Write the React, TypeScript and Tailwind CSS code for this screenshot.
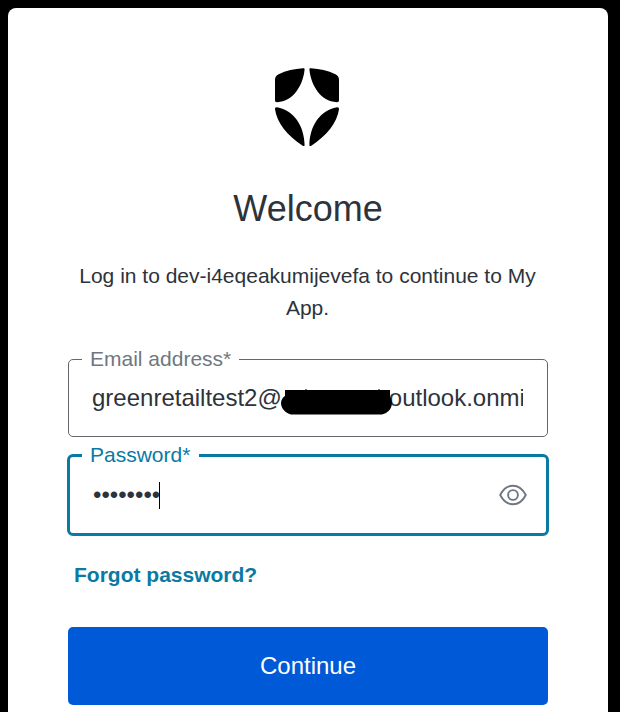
function Logo() {
  return (
    <svg className="ml-[206px] block h-[79px] w-[66px]" viewBox="0 0 66 79" fill="#000">
      <path d="M29 .2C30 .1 30.7.5 30.6 1.5 29 17.500 19.500 33.200 3.2 34.2 1.7 34.3 1 33.5 1 32.2V11.8C1 9.3 2.3 7.3 4.6 6.2 12 2.5 20.5.7 29 .2Z" />
      <path d="M37 .2C36 .1 35.3.5 35.4 1.5 37 17.500 46.500 33.200 62.8 34.2 64.3 34.3 65 33.5 65 32.2V11.8C65 9.3 63.7 7.3 61.4 6.2 54 2.5 45.5.7 37 .2Z" />
      <path d="M3 39.2C1.6 39 .9 39.7 1 41.2 3 55 13 67 28.7 77.8 30 78.4 30.7 78 30.6 76.8 30.2 58 20 42 3 39.2Z" />
      <path d="M63 39.2C64.4 39 65.1 39.7 65 41.2 63 55 53 67 37.3 77.8 36 78.4 35.3 78 35.4 76.8 35.8 58 46 42 63 39.2Z" />
    </svg>
  );
}

function EyeIcon() {
  return (
    <svg className="h-[22px] w-[28px] shrink-0" viewBox="0 0 28 22" fill="none" stroke="#6f7780" strokeWidth="1.9">
      <path d="M1.200 11C4.5 4.6 8.8 1.7 14 1.7S23.500 4.600 26.800 11C23.500 17.400 19.200 20.300 14 20.300S4.500 17.400 1.200 11Z" />
      <circle cx="14" cy="11" r="4.900" />
    </svg>
  );
}

export default function App() {
  return (
    <div className="h-[712px] overflow-hidden bg-black pt-2 pl-2 font-['Liberation_Sans',Arial,sans-serif] text-[#2d333a]">
      <main className="h-[740px] w-[600px] rounded-lg bg-white px-[60px] pt-[60px]">
        <Logo />
        <h1 className="mt-[36px] text-center text-[36px] leading-[52px]">Welcome</h1>
        <p className="mt-[25px] -ml-px text-center text-[21px] leading-8">
          Log in to dev-i4eqeakumijevefa to continue to My App.
        </p>
        <div className="relative mt-[35px] flex h-[78px] items-center rounded-[5px] border border-[#65676e] pr-6 pl-[23px]">
          <label className="absolute -top-[14px] left-[13px] bg-white px-2 text-[21px] leading-[25px] text-[#6f7780]">
            Email address*
          </label>
          <div className="flex h-8 w-full overflow-hidden text-[24px] leading-8 whitespace-nowrap">
            <span className="mr-[107px]">greenretailtest2@</span>
            <span>outlook.onmi</span>
          </div>
          <svg className="absolute top-[29px] left-[212px] h-[26px] w-[112px]" viewBox="0 0 112 26">
            <path d="M4 1H109V8C112 12 112 20 105 24L101 25.500H10C4 24 0 19 0 14C0 11 2 8 4 7Z" />
            <path d="M24 0H26V1H24ZM97 0H99V1H97Z" fill="#777" />
          </svg>
        </div>
        <div className="relative -mx-px mt-[17px] flex h-[82px] items-center rounded-[6px] border-[3px] border-[#0a7aa3] pr-[19px] pl-[23px]">
          <label className="absolute -top-[15px] left-[12px] bg-white pr-[9px] pl-2 text-[21px] leading-[25px] text-[#0a7aa3]">
            Password*
          </label>
          <div className="flex flex-1 items-center text-[24px] leading-8">
            <span>••••••••</span>
            <span className="-ml-px h-[27px] w-px bg-black" />
          </div>
          <EyeIcon />
        </div>
        <a className="mt-[23px] ml-[6px] block text-[21px] leading-8 font-bold text-[#0a7aa3]">Forgot password?</a>
        <button className="mt-[36px] block h-[78px] w-full rounded-[5px] bg-[#0059d6] text-[24px] text-white">
          Continue
        </button>
      </main>
    </div>
  );
}
